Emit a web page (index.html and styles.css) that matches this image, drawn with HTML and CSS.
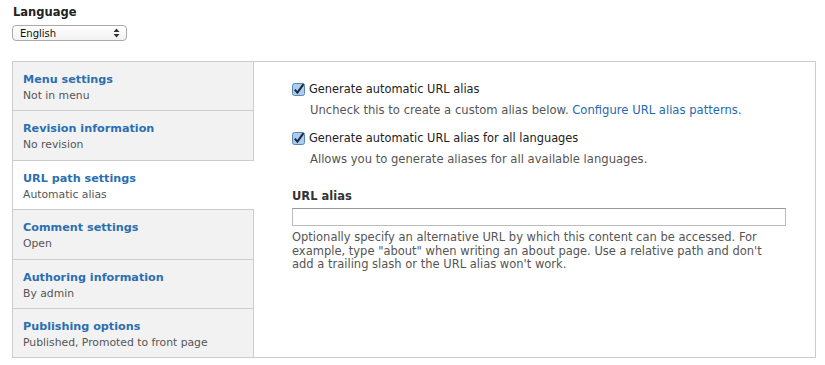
FILE: index.html
```html
<!DOCTYPE html>
<html>
<head>
<meta charset="utf-8">
<link rel="stylesheet" href="styles.css">
</head>
<body>
<div class="page">
  <div class="lang">
    <div class="lang-label">Language</div>
    <div class="select">
      <span>English</span>
      <svg class="arrows" width="7" height="10" viewBox="0 0 7 10"><path d="M3.5 0.5 L6.5 4 L0.5 4 Z M3.5 9.5 L6.5 6 L0.5 6 Z" fill="#333"/></svg>
    </div>
  </div>
  <div class="vtabs">
    <ul class="tabs">
      <li class="tab"><a class="tab-title">Menu settings</a><span class="tab-sum">Not in menu</span></li>
      <li class="tab"><a class="tab-title">Revision information</a><span class="tab-sum">No revision</span></li>
      <li class="tab active"><a class="tab-title">URL path settings</a><span class="tab-sum">Automatic alias</span></li>
      <li class="tab"><a class="tab-title">Comment settings</a><span class="tab-sum">Open</span></li>
      <li class="tab"><a class="tab-title">Authoring information</a><span class="tab-sum">By admin</span></li>
      <li class="tab last"><a class="tab-title">Publishing options</a><span class="tab-sum">Published, Promoted to front page</span></li>
    </ul>
    <div class="pane">
      <div class="item">
        <label class="check"><span class="cb"><svg width="13" height="13" viewBox="0 0 13 13"><rect x="0.5" y="0.5" width="12" height="12" rx="2" fill="#a9cdf0" stroke="#5d85b3"/><path d="M2.8 6.6 L5.4 9.6 L11.5 1.2" fill="none" stroke="#1d2a3c" stroke-width="2"/></svg></span>Generate automatic URL alias</label>
        <div class="desc">Uncheck this to create a custom alias below. <a class="link">Configure URL alias patterns.</a></div>
      </div>
      <div class="item">
        <label class="check"><span class="cb"><svg width="13" height="13" viewBox="0 0 13 13"><rect x="0.5" y="0.5" width="12" height="12" rx="2" fill="#a9cdf0" stroke="#5d85b3"/><path d="M2.8 6.6 L5.4 9.6 L11.5 1.2" fill="none" stroke="#1d2a3c" stroke-width="2"/></svg></span>Generate automatic URL alias for all languages</label>
        <div class="desc">Allows you to generate aliases for all available languages.</div>
      </div>
      <div class="field">
        <div class="field-label">URL alias</div>
        <div class="input"></div>
        <div class="help">Optionally specify an alternative URL by which this content can be accessed. For example, type "about" when writing an about page. Use a relative path and don't add a trailing slash or the URL alias won't work.</div>
      </div>
    </div>
  </div>
</div>
</body>
</html>
```
FILE: styles.css
```css
* { box-sizing: border-box; }
body { margin: 0; background: #fff; font-family: "DejaVu Sans", Verdana, sans-serif; color: #333; }
.page { padding: 4px 10px 0 12px; }
.lang-label { font-weight: bold; font-size: 11.5px; line-height: 17px; color: #222; padding-left: 1px; }
.select { margin-top: 4px; width: 115px; height: 16px; border: 1px solid #aaa; border-radius: 4px; display: flex; align-items: center; justify-content: space-between; padding: 0 6px 0 7px; font-size: 10px; color: #111; background: linear-gradient(#fff, #f2f2f2); }
.arrows { display: block; }
.vtabs { margin-top: 20px; width: 804px; height: 297px; border: 1px solid #ccc; display: flex; }
.tabs { list-style: none; margin: 0; padding: 0; width: 241px; flex: none; background: #f2f2f2; border-right: 1px solid #ccc; }
.tab { height: 49.4px; border-bottom: 1px solid #ccc; padding: 10px 10px 0 10px; display: flex; flex-direction: column; }
.tab.last { border-bottom: none; }
.tab.active { background: #fff; margin-right: -1px; }
.tab-title { font-weight: bold; font-size: 11.2px; line-height: 15px; color: #2b6fb0; }
.tab-sum { font-size: 10.8px; line-height: 17px; color: #555; }
.pane { flex: 1; padding: 20px 28px 0 38px; font-size: 11.5px; }
.item { margin-bottom: 14px; }
.check { display: flex; align-items: center; line-height: 14px; color: #222; font-size: 11.4px; }
.cb { width: 13px; height: 13px; margin-right: 4px; display: block; }
.cb svg { display: block; }
.desc { padding-left: 18px; margin-top: 7px; line-height: 14px; color: #555; font-size: 11.6px; }
.link { color: #1f6ab0; }
.field { margin-top: 23px; }
.field-label { font-weight: bold; font-size: 11.5px; line-height: 14px; color: #333; }
.input { margin-top: 5px; width: 494px; height: 18px; border: 1px solid #bbb; border-top-color: #999; }
.help { margin-top: 5px; width: 494px; font-size: 11.5px; line-height: 13.7px; color: #555; }
```
